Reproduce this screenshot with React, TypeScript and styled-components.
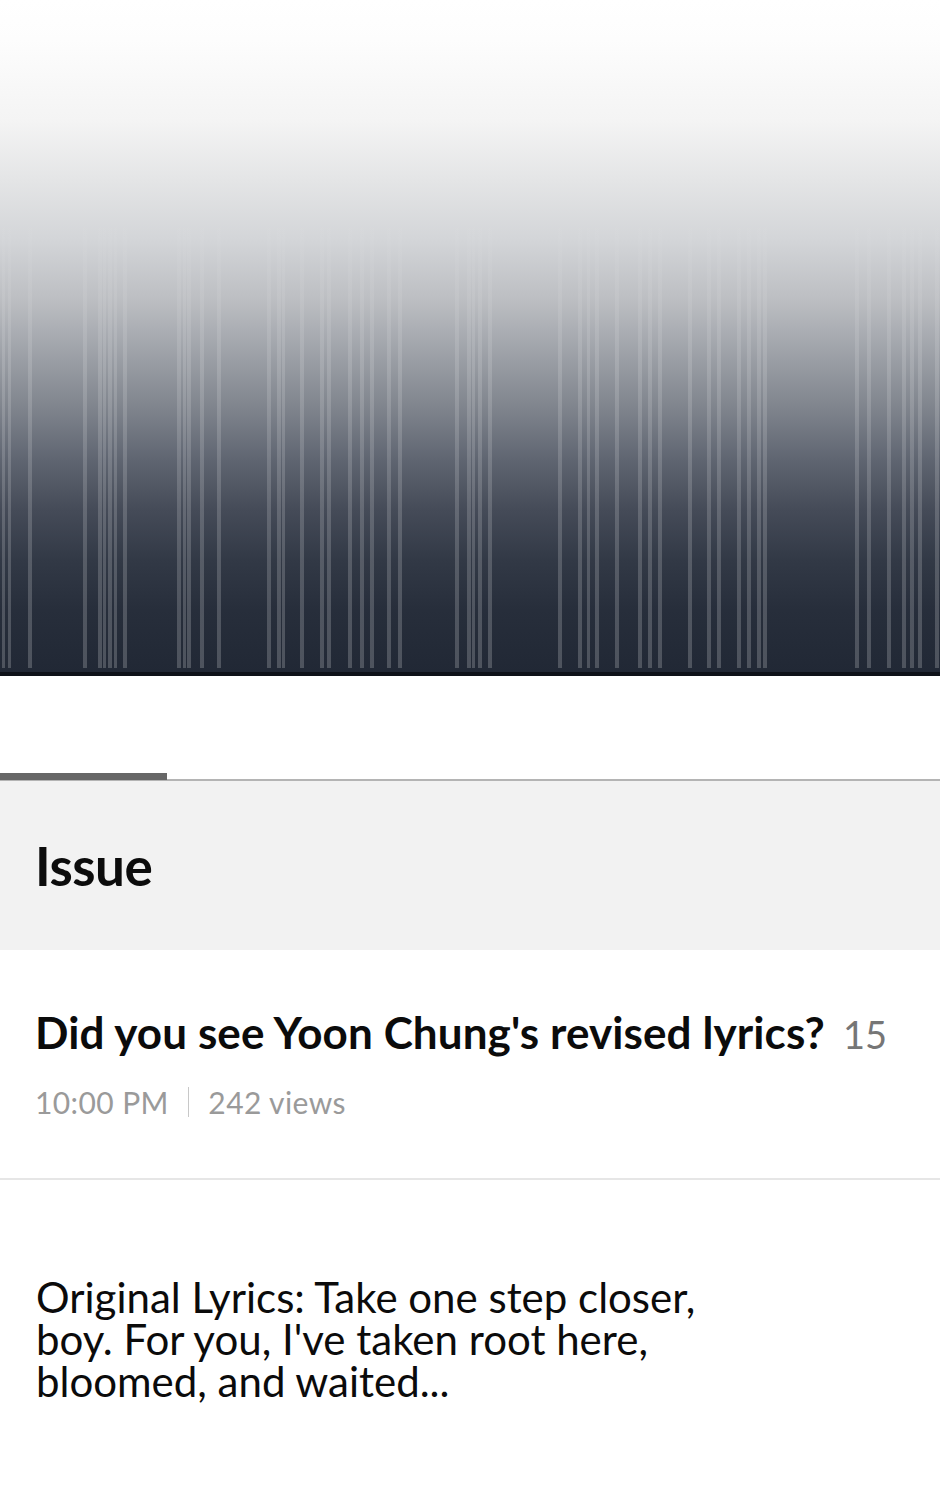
import React from "react";
import styled, { createGlobalStyle } from "styled-components";

const Global = createGlobalStyle`
  html, body { margin: 0; padding: 0; background: #ffffff; }
  body { font-family: Lato, "Noto Sans", sans-serif; color: #111; }
  * { box-sizing: border-box; }
`;

const Page = styled.div`
  width: 940px;
  display: flex;
  flex-direction: column;
  background: #fff;
`;

const Banner = styled.div`
  position: relative;
  height: 676px;
  border-bottom: 4px solid #0e1219;
  background: linear-gradient(
    to bottom,
    #ffffff 0px,
    #fdfdfd 40px,
    #f4f4f4 120px,
    #e4e5e6 180px,
    #d3d5d8 240px,
    #bcbec2 300px,
    #9a9ea5 360px,
    #7e838c 410px,
    #5f6571 460px,
    #454b58 510px,
    #323946 560px,
    #272e3b 610px,
    #212835 672px
  );
  overflow: hidden;
`;

const StripeArt = styled.svg`
  display: block;
  width: 100%;
  height: 100%;
`;

const Tabs = styled.div`
  padding-top: 97px;
`;

const TabTrack = styled.div`
  display: flex;
  align-items: flex-end;
  height: 8px;
  border-bottom: 2px solid #b4b4b4;
`;

const TabIndicator = styled.div<{ $w: number }>`
  width: ${(p) => p.$w}px;
  height: 7px;
  margin-bottom: -1px;
  background: #676767;
`;

const SectionHeader = styled.div`
  height: 169px;
  background: #f2f2f2;
  display: flex;
  align-items: center;
  padding: 0 35px;
`;

const SectionTitle = styled.h1`
  margin: 0;
  font-family: Lato, sans-serif;
  font-weight: 700;
  font-size: 53px;
  letter-spacing: -0.5px;
  color: #0c0c0c;
  line-height: 1;
`;

const PostItem = styled.div`
  height: 230px;
  border-bottom: 2px solid #e6e6e6;
  display: flex;
  flex-direction: column;
  padding: 58px 35px 0;
`;

const PostTitle = styled.div`
  display: flex;
  align-items: baseline;
  gap: 18px;
  font-family: Lato, sans-serif;
  font-size: 44px;
  line-height: 48px;
  letter-spacing: 0.1px;
`;

const TitleText = styled.span`
  font-weight: 700;
  color: #0b0b0b;
`;

const CommentCount = styled.span`
  font-weight: 400;
  font-size: 38px;
  color: #767676;
  letter-spacing: 0;
`;

const Meta = styled.div`
  margin-top: 28px;
  display: flex;
  align-items: center;
  gap: 19px;
  font-family: Lato, sans-serif;
  font-size: 30px;
  line-height: 32px;
  color: #9a9a9a;
  letter-spacing: 0.4px;
`;

const MetaDivider = styled.span`
  width: 1.5px;
  height: 30px;
  background: #c8c8c8;
`;

const Body = styled.div`
  padding: 96px 35px 80px 36px;
`;

const BodyText = styled.p`
  margin: 0;
  max-width: 720px;
  font-family: Lato, "Open Sans", sans-serif;
  font-size: 42px;
  line-height: 42px;
  letter-spacing: 0;
  color: #0b0b0b;
`;

const stripes: [number, number][] = [
  [2, 3], [8, 3], [28, 4], [83, 4], [98, 4], [103, 3], [108, 4], [114, 3], [123, 4],
  [177, 4], [183, 3], [187, 4], [200, 4], [217, 4], [267, 4], [277, 4], [282, 3],
  [300, 4], [320, 4], [327, 4], [348, 4], [360, 4], [370, 4], [387, 4], [398, 4],
  [455, 4], [467, 4], [472, 3], [478, 4], [488, 4], [558, 4], [578, 4], [587, 3],
  [595, 4], [615, 4], [638, 4], [648, 4], [658, 4], [688, 4], [707, 4], [717, 4],
  [737, 4], [747, 4], [757, 4], [763, 4], [855, 4], [867, 4], [887, 4], [902, 4],
  [910, 4], [918, 4], [935, 4],
];

function Stripes() {
  return (
    <StripeArt viewBox="0 0 940 672" preserveAspectRatio="none">
      <defs>
        <linearGradient id="fade" x1="0" y1="0" x2="0" y2="1">
          <stop offset="0" stopColor="#fff" stopOpacity="0" />
          <stop offset="0.32" stopColor="#fff" stopOpacity="0" />
          <stop offset="0.55" stopColor="#fff" stopOpacity="0.14" />
          <stop offset="1" stopColor="#fff" stopOpacity="0.2" />
        </linearGradient>
      </defs>
      {stripes.map(([x, w]) => (
        <rect key={x} x={x} y={0} width={w} height={668} fill="url(#fade)" />
      ))}
    </StripeArt>
  );
}

export default function App() {
  return (
    <Page>
      <Global />
      <Banner>
        <Stripes />
      </Banner>
      <Tabs>
        <TabTrack>
          <TabIndicator $w={167} />
        </TabTrack>
      </Tabs>
      <SectionHeader>
        <SectionTitle>Issue</SectionTitle>
      </SectionHeader>
      <PostItem>
        <PostTitle>
          <TitleText>Did you see Yoon Chung's revised lyrics?</TitleText>
          <CommentCount>15</CommentCount>
        </PostTitle>
        <Meta>
          <span>10:00 PM</span>
          <MetaDivider />
          <span>242 views</span>
        </Meta>
      </PostItem>
      <Body>
        <BodyText>
          Original Lyrics: Take one step closer, boy. For you, I've taken root here, bloomed, and waited...
        </BodyText>
      </Body>
    </Page>
  );
}
